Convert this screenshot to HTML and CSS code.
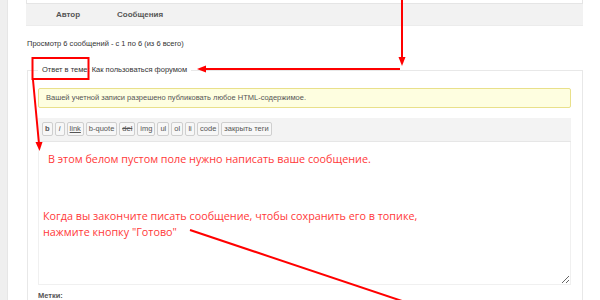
FILE: index.html
```html
<!DOCTYPE html>
<html>
<head>
    <title>Ответ в теме - Форум</title>
    <link rel="stylesheet" href="styles.css">
</head>
<body>
    <div class="page">
        <div class="side"></div>
        <div class="main">
            <div class="topics">
                <div class="topics-prev"></div>
                <div class="topics-head">
                    <span class="col-author">Автор</span>
                    <span class="col-posts">Сообщения</span>
                </div>
            </div>
            <p class="count">Просмотр 6 сообщений - с 1 по 6 (из 6 всего)</p>
            <fieldset class="reply">
                <legend>Ответ в теме: Как пользоваться форумом</legend>
                <div class="notice">Вашей учетной записи разрешено публиковать любое HTML-содержимое.</div>
                <div class="toolbar">
                    <button class="tag tag-b">b</button>
                    <button class="tag tag-i">i</button>
                    <button class="tag tag-link">link</button>
                    <button class="tag">b-quote</button>
                    <button class="tag tag-del">del</button>
                    <button class="tag">img</button>
                    <button class="tag">ul</button>
                    <button class="tag">ol</button>
                    <button class="tag">li</button>
                    <button class="tag">code</button>
                    <button class="tag">закрыть теги</button>
                </div>
                <textarea class="message"></textarea>
                <label class="tags-label">Метки:</label>
            </fieldset>
        </div>

        <div class="notes">
            <svg class="notes-lines" width="600" height="300" viewBox="0 0 600 300">
                <rect x="32.5" y="58" width="56" height="21" fill="none" stroke="#f00" stroke-width="2"/>
                <line x1="33" y1="80" x2="39" y2="144" stroke="#f00" stroke-width="2"/>
                <polygon points="35.5,142 42.5,142 39.5,151" fill="#f00"/>
                <line x1="402" y1="0" x2="402" y2="58" stroke="#f00" stroke-width="2"/>
                <polygon points="398.5,57 405.5,57 402,66" fill="#f00"/>
                <line x1="400" y1="69" x2="204" y2="69" stroke="#f00" stroke-width="2"/>
                <polygon points="206,65.5 206,72.5 197,69" fill="#f00"/>
                <line x1="190" y1="230" x2="420" y2="307" stroke="#f00" stroke-width="2"/>
            </svg>
            <div class="note note-first">В этом белом пустом поле нужно написать ваше сообщение.</div>
            <div class="note note-second">Когда вы закончите писать сообщение, чтобы сохранить его в топике,<br>нажмите кнопку "Готово"</div>
        </div>
    </div>
</body>
</html>
```

FILE: styles.css
```css
body {
    margin: 0;
    padding: 0;
    background: white;
    font-family: "Liberation Sans", Arial, sans-serif;
    color: #333;
}
.page {
    position: relative;
    display: flex;
    width: 600px;
    height: 300px;
    overflow: hidden;
}
.side {
    width: 7px;
    background: #efefef;
    border-right: 1px solid #e6e6e6;
}
.main {
    width: 557px;
    margin-left: 18px;
}
.topics-prev {
    height: 3px;
    border: 1px solid #e5e5e5;
    border-top: none;
}
.topics-head {
    display: flex;
    align-items: center;
    height: 21px;
    background: #f2f2f2;
    border-bottom: 1px solid #ececec;
    font-size: 8px;
    font-weight: bold;
    color: #555;
}
.col-author {
    width: 84px;
    text-align: center;
}
.col-posts {
    margin-left: 7px;
}
.count {
    margin: 13px 0 15px 1px;
    font-size: 7.5px;
    line-height: 10px;
}
.reply {
    margin: 0 0 0 1px;
    padding: 0 11px 0 10px;
    border: 1px solid #e8e8e8;
}
.reply legend {
    padding: 0 4px;
    font-size: 7.5px;
    line-height: 12px;
    color: #333;
}
.notice {
    margin-top: 12px;
    height: 18px;
    padding: 0 7px;
    line-height: 18px;
    background: #fefee0;
    border: 1px solid #e9e08a;
    border-radius: 2px;
    font-size: 7.5px;
    color: #555;
}
.toolbar {
    display: flex;
    gap: 2px;
    margin-top: 10px;
    padding: 4px 4px 5px;
    background: #f3f3f3;
    border-bottom: 1px solid #e6e6e6;
}
.tag {
    min-width: 10px;
    height: 14px;
    padding: 0 2px;
    font-family: "Liberation Sans", Arial, sans-serif;
    font-size: 7.5px;
    line-height: 12px;
    color: #555;
    background: #f7f7f7;
    border: 1px solid #cfcfcf;
    border-radius: 2px;
}
.tag-b {
    font-weight: bold;
}
.tag-i {
    font-style: italic;
}
.tag-link {
    text-decoration: underline;
}
.tag-del {
    text-decoration: line-through;
}
.message {
    display: block;
    box-sizing: border-box;
    width: 100%;
    height: 143px;
    margin: 0;
    border: 1px solid #f0f0f0;
    border-top: none;
    background: white;
}
.tags-label {
    display: block;
    margin-top: 6px;
    font-size: 7.5px;
    font-weight: bold;
    color: #555;
}
.notes {
    position: absolute;
    left: 0;
    top: 0;
    width: 600px;
    height: 300px;
    pointer-events: none;
}
.notes-lines {
    position: absolute;
    left: 0;
    top: 0;
}
.note {
    position: absolute;
    font-family: "Open Sans", sans-serif;
    font-size: 10.8px;
    line-height: 16px;
    color: #ff3838;
    white-space: nowrap;
}
.note-first {
    left: 48px;
    top: 151px;
}
.note-second {
    left: 43px;
    top: 208px;
}
```
